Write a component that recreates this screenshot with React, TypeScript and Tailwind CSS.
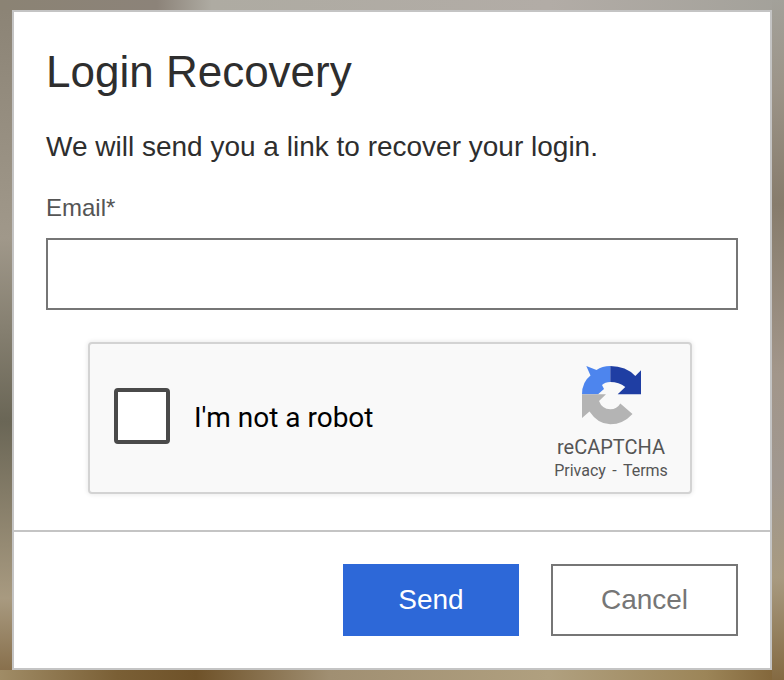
export default function App() {
  return (
    <div className="flex h-[680px] w-[784px] items-start overflow-hidden bg-[linear-gradient(to_right,#8f8678_0%,#a89e90_100%)] px-3 pt-2.5 relative">
      {/* Backdrop photo blur */}
      <div className="absolute inset-0 bg-[linear-gradient(to_bottom,#8b8375_0%,#a0988a_35%,#6a6656_62%,#a89a80_88%,#846a45_100%)]" />
      <div className="absolute inset-x-0 top-0 h-2.5 bg-[linear-gradient(to_right,#8b8374_0%,#8c8379_20%,#aeaba2_27%,#b2aca6_70%,#a3a19a_100%)]" />
      <div className="absolute inset-x-0 bottom-0 h-2.5 bg-[linear-gradient(to_right,#a08c66_0%,#7a5f35_15%,#6f5229_25%,#a08f72_42%,#b0a07f_70%,#9c8558_90%,#7f6236_100%)]" />
      <div className="absolute inset-y-0 right-0 w-3 bg-[linear-gradient(to_bottom,#a3a19a_0%,#9c9488_13%,#877c6c_30%,#a2968a_55%,#a0978f_70%,#a89a80_85%,#846a42_100%)]" />

      <div className="relative flex h-[660px] w-[760px] flex-col border-2 border-[#c4c4c4] bg-white font-['Liberation_Sans',Arial,sans-serif]">
        {/* Body */}
        <div className="flex flex-1 flex-col px-[32px] pt-[31px]">
          <h1 className="text-[44px] leading-[58px] font-normal text-[#2e2e2e]">Login Recovery</h1>
          <p className="mt-[28px] text-[28px] leading-[36px] text-[#2e2e2e]">We will send you a link to recover your login.</p>
          <label className="mt-[28px] text-2xl leading-[30px] text-[#555]">Email*</label>
          <input type="text" className="mt-[15px] h-[72px] w-[692px] border-2 border-[#767676] bg-white outline-none" />

          {/* reCAPTCHA */}
          <div className="mt-[32px] ml-[42px] flex h-[152px] w-[604px] items-center rounded-[4px] border-2 border-[#d3d3d3] bg-[#f9f9f9] pr-[11px] pl-[24px] shadow-[0_0_4px_1px_rgba(0,0,0,0.08)] font-['Roboto',sans-serif]">
            <div className="mb-1 h-14 w-14 rounded-[4px] border-[4px] border-[#4a4a4a] bg-white" />
            <span className="ml-6 text-[28px] text-black">I'm not a robot</span>
            <div className="ml-auto flex w-[136px] flex-col items-center pt-[11px] text-[#555]">
              <svg viewBox="0 0 60 60" className="h-[60px] w-[60px]">
                <path fill="#4d85ee" d="M1 29.3 Q1 17 9.5 10.5 L5.3 1 L15.5 5 Q21 1 29.3 1 L29.3 17 Q24 17 21 20 L23 24 L17 29.3Z" />
                <path fill="#1f3ea3" d="M29.3 1 Q45 1 54.3 11 L60 5.3 L60 29.3 L36.7 29.3 L44.3 22 Q38 17 29.3 17Z" />
                <path fill="#b4b4b4" d="M1 29.3 L25 29.3 L18 36 Q21 44 29.3 44.3 Q36 44.3 39.3 38.5 L51.5 49 Q42 59.3 29.3 59.3 Q17 59.3 8.5 46.5 L1 53Z" />
              </svg>
              <span className="mt-[10px] text-[20px] leading-[24px]">reCAPTCHA</span>
              <span className="mt-px text-[16px] leading-[22px]">
                Privacy <span className="mx-[2.5px]">-</span> Terms
              </span>
            </div>
          </div>
        </div>

        {/* Footer */}
        <div className="flex h-[138px] justify-end gap-8 border-t-2 border-[#c4c4c4] px-[32px] pt-[32px]">
          <button className="h-[72px] w-[176px] bg-[#2d68d8] text-[28px] text-white">Send</button>
          <button className="h-[72px] w-[187px] border-2 border-[#767676] bg-white text-[28px] text-[#767676]">Cancel</button>
        </div>
      </div>
    </div>
  );
}
